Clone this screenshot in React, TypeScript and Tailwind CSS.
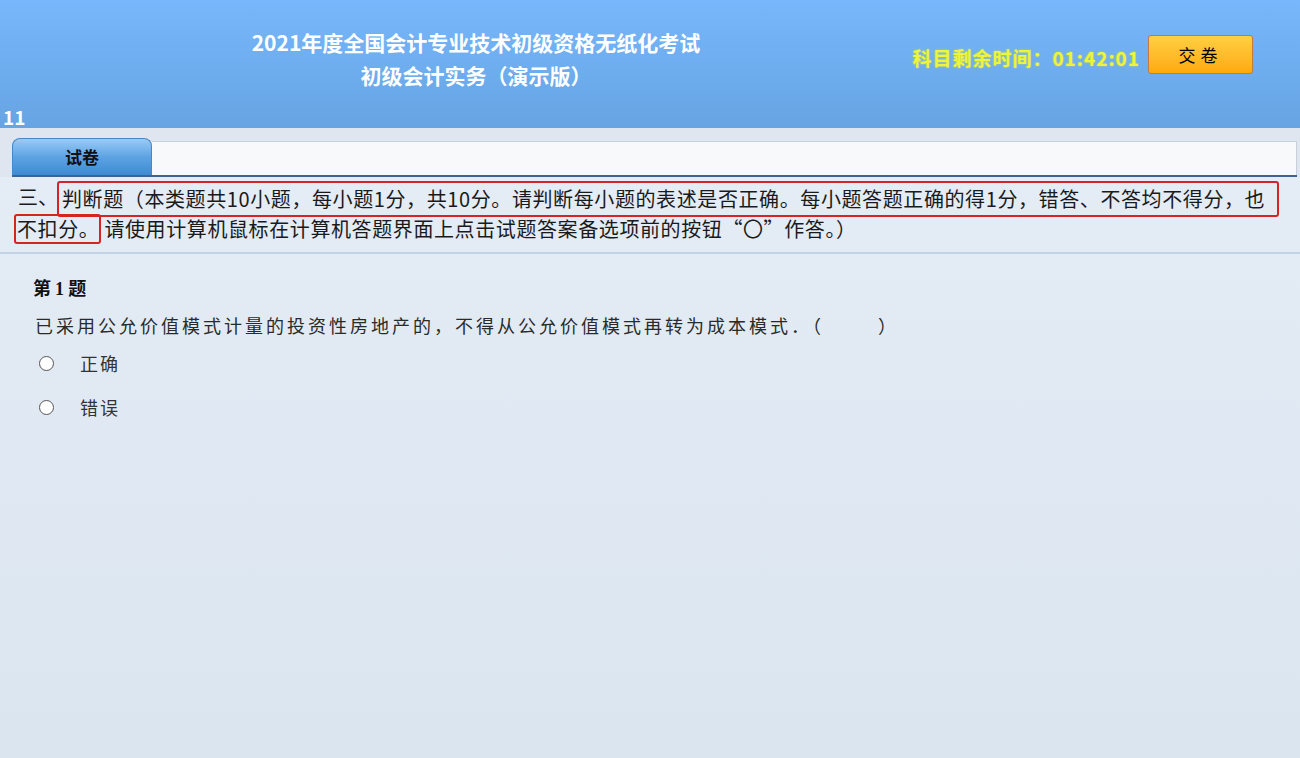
const sans = "font-['Noto_Sans_CJK_SC','Noto_Sans',sans-serif]";

const Header = () => {
  return (
    <header className="relative h-[128px] bg-gradient-to-b from-[#77b7fb] to-[#66a4e3]">
      <div className="flex h-full">
        <div className="ml-[152px] flex w-[648px] shrink-0 flex-col items-center pt-[26px] text-[21px] font-bold leading-[33px] text-white">
          <div className="whitespace-nowrap">2021年度全国会计专业技术初级资格无纸化考试</div>
          <div className="whitespace-nowrap">初级会计实务（演示版）</div>
        </div>
        <div className="flex flex-1 items-start justify-end pr-[47px] pt-[35px]">
          <div className="mt-[9px] whitespace-nowrap text-[19px] font-bold tracking-[1px] text-[#eef33c] [text-shadow:0_0_2px_#c8e040]">
            科目剩余时间：01:42:01
          </div>
          <button className="ml-[8px] h-[39px] w-[105px] shrink-0 rounded-[3px] border border-[#c27a3e] bg-gradient-to-b from-[#ffd040] to-[#ffa90c] text-[17px] tracking-[5px] text-black">
            交卷
          </button>
        </div>
      </div>
      <div className="absolute bottom-0 left-[3px] text-[19px] font-bold leading-[22px] text-white">
        11
      </div>
    </header>
  );
};

const Tabs = () => {
  return (
    <div className="bg-[#dfe6ef] pt-[10px]">
      <div className="flex items-end pl-[12px] pr-[3px]">
        <div className="flex h-[37px] w-[140px] items-center justify-center rounded-t-[8px] border border-b-0 border-[#4a86c4] bg-gradient-to-b from-[#9acbf6] via-[#5ca3e3] to-[#3d8bd3] text-[17px] font-bold text-[#111]">
          试卷
        </div>
        <div className="h-[34px] flex-1 border-t border-r border-[#c6d0dc] bg-[#f8f9fb]" />
      </div>
      <div className="ml-[12px] mr-[3px] h-[2px] bg-[#3c6396]" />
    </div>
  );
};

const Instructions = () => {
  return (
    <div className="border-b-2 border-[#c3d2e4] pb-[7px] pl-[14px] pt-[4px] text-[20px] leading-[32px] text-[#1a1a1a]">
      <div className="flex pl-[4px]">
        <span>三、</span>
        <span className="-ml-[1px] rounded-[3px] border-2 border-[#d42424] pl-[3px] pr-[12px] tracking-[0.6px]">
          判断题（本类题共10小题，每小题1分，共10分。请判断每小题的表述是否正确。每小题答题正确的得1分，错答、不答均不得分，也
        </span>
      </div>
      <div className="-mt-[4px] flex items-center tracking-[0.6px]">
        <span className="mr-[3px] rounded-[3px] border-2 border-[#d42424] pl-[1px] leading-[26px]">不扣分。</span>
        <span>请使用计算机鼠标在计算机答题界面上点击试题答案备选项前的按钮“〇”作答。）</span>
      </div>
    </div>
  );
};

const Option = ({ label }: { label: string }) => {
  return (
    <div className="flex h-[44px] items-center pl-[39px]">
      <span className="h-[15px] w-[15px] rounded-full border border-[#555] bg-white" />
      <span className="ml-[26px] text-[18px] tracking-[2px] text-[#333]">{label}</span>
    </div>
  );
};

const Question = () => {
  return (
    <div className="pl-[33px] pt-[19px]">
      <div className="text-[18px] font-bold leading-[28px] text-[#111]">
        第 <span className="font-['Liberation_Serif',serif]">1</span> 题
      </div>
      <div className="mt-[8px] pl-[2px] text-[18px] leading-[28px] tracking-[3px] text-[#2a2a2a]">
        已采用公允价值模式计量的投资性房地产的，不得从公允价值模式再转为成本模式．（<span className="inline-block w-[54px]" />）
      </div>
      <div className="-ml-[33px] mt-[2px]">
        <Option label="正确" />
        <Option label="错误" />
      </div>
    </div>
  );
};

export default function App() {
  return (
    <div className={`${sans} flex h-[758px] w-[1300px] flex-col overflow-hidden bg-[#dfe8f2]`}>
      <Header />
      <Tabs />
      <div className="flex-1 bg-gradient-to-b from-[#e4ecf5] to-[#dbe5f0]">
        <Instructions />
        <Question />
      </div>
    </div>
  );
}
